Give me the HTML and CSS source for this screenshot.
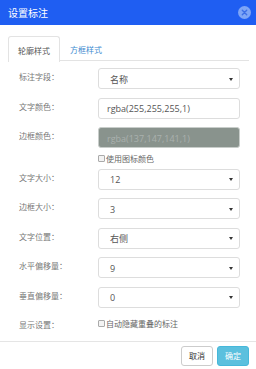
FILE: index.html
```html
<!DOCTYPE html>
<html lang="zh-CN">
<head>
    <meta charset="UTF-8">
    <title>设置标注</title>
    <link rel="stylesheet" href="styles.css">
</head>
<body>
    <div class="modal">
        <div class="modal-header">
            <span class="modal-title">设置标注</span>
            <span class="close-btn">
                <svg width="13" height="13" viewBox="0 0 13 13">
                    <circle cx="6.5" cy="6.5" r="6.5" fill="#7ea5f6"/>
                    <path d="M4.3 4.3 L8.7 8.7 M8.7 4.3 L4.3 8.7" stroke="#3d6fe6" stroke-width="1.4" stroke-linecap="round"/>
                </svg>
            </span>
        </div>

        <div class="modal-body">
            <div class="tabs">
                <div class="tab active">轮廓样式</div>
                <div class="tab">方框样式</div>
            </div>

            <div class="form">
                <div class="form-row">
                    <label>标注字段：</label>
                    <div class="field select"><span>名称</span><i class="caret"></i></div>
                </div>
                <div class="form-row">
                    <label>文字颜色：</label>
                    <div class="field"><span>rgba(255,255,255,1)</span></div>
                </div>
                <div class="form-row tight">
                    <label>边框颜色：</label>
                    <div class="field color-field"><span>rgba(137,147,141,1)</span></div>
                </div>
                <div class="check-row">
                    <span class="checkbox"></span>使用图标颜色
                </div>
                <div class="form-row">
                    <label>文字大小：</label>
                    <div class="field select"><span>12</span><i class="caret"></i></div>
                </div>
                <div class="form-row">
                    <label>边框大小：</label>
                    <div class="field select"><span>3</span><i class="caret"></i></div>
                </div>
                <div class="form-row">
                    <label>文字位置：</label>
                    <div class="field select"><span>右侧</span><i class="caret"></i></div>
                </div>
                <div class="form-row">
                    <label>水平偏移量：</label>
                    <div class="field select"><span>9</span><i class="caret"></i></div>
                </div>
                <div class="form-row">
                    <label>垂直偏移量：</label>
                    <div class="field select"><span>0</span><i class="caret"></i></div>
                </div>
                <div class="form-row display-row">
                    <label>显示设置：</label>
                    <div class="check-inline"><span class="checkbox"></span>自动隐藏重叠的标注</div>
                </div>
            </div>
        </div>

        <div class="modal-footer">
            <button class="btn btn-default">取消</button>
            <button class="btn btn-primary">确定</button>
        </div>
    </div>
</body>
</html>
```

FILE: styles.css
```css
* {
    margin: 0;
    padding: 0;
    box-sizing: border-box;
    font-family: 'Open Sans', 'Noto Sans CJK SC', sans-serif;
}

body {
    background: white;
    width: 256px;
    height: 369px;
    overflow: hidden;
}

.modal {
    width: 256px;
    height: 369px;
    display: flex;
    flex-direction: column;
}

.modal-header {
    height: 25px;
    background: #1f5ef2;
    display: flex;
    align-items: center;
    justify-content: space-between;
    padding: 0 5px 1px 8px;
}

.modal-title {
    color: white;
    font-size: 10px;
}

.close-btn {
    display: flex;
}

.modal-body {
    padding: 11px 7px 0 8px;
    flex: 1;
}

.tabs {
    display: flex;
    border-bottom: 1px solid #e3e3e3;
    height: 25px;
}

.tab {
    width: 52px;
    height: 25px;
    font-size: 8px;
    color: #3d8bd0;
    display: flex;
    align-items: center;
    justify-content: center;
    padding-top: 1px;
}

.tab.active {
    color: #555;
    border: 1px solid #e3e3e3;
    border-bottom: none;
    border-radius: 3px 3px 0 0;
    background: white;
    height: 26px;
}

.form {
    padding-top: 7px;
}

.form-row {
    display: flex;
    margin-bottom: 8.5px;
}

.form-row.tight {
    margin-bottom: 0;
}

.form-row label {
    width: 90px;
    padding-left: 11px;
    padding-top: 3px;
    font-size: 8px;
    color: #777;
}

.field {
    width: 142px;
    height: 21px;
    border: 1px solid #ddd;
    border-radius: 3px;
    display: flex;
    align-items: center;
    justify-content: space-between;
    padding: 1px 6px 0 8px;
    font-size: 9px;
    color: #555;
}

.field.select {
    padding-left: 11px;
}

.color-field {
    background: #89938d;
    border-color: #c8cdca;
    color: #aab1ad;
}

.caret {
    width: 0;
    height: 0;
    border-left: 2px solid transparent;
    border-right: 2px solid transparent;
    border-top: 3px solid #333;
}

.check-row {
    height: 20.5px;
    padding-left: 90px;
    display: flex;
    align-items: center;
    font-size: 8px;
    color: #666;
}

.checkbox {
    width: 7px;
    height: 7px;
    border: 1px solid #aaa;
    border-radius: 1px;
    background: #f3f3f3;
    margin-right: 1px;
    display: inline-block;
}

.display-row {
    margin-top: 5px;
}

.check-inline {
    display: flex;
    align-items: center;
    font-size: 8px;
    color: #666;
    padding-top: 2px;
    height: 13px;
}

.modal-footer {
    border-top: 1px solid #e5e5e5;
    height: 28px;
    display: flex;
    justify-content: flex-end;
    align-items: center;
    gap: 4px;
    padding: 0 7px 0 0;
}

.btn {
    width: 32px;
    height: 20px;
    font-size: 8px;
    border-radius: 3px;
    border: 1px solid #ccc;
    background: white;
    color: #333;
    font-family: 'Noto Sans CJK SC', sans-serif;
}

.btn-primary {
    background: #5bc0de;
    border-color: #46b8da;
    color: white;
}
```
